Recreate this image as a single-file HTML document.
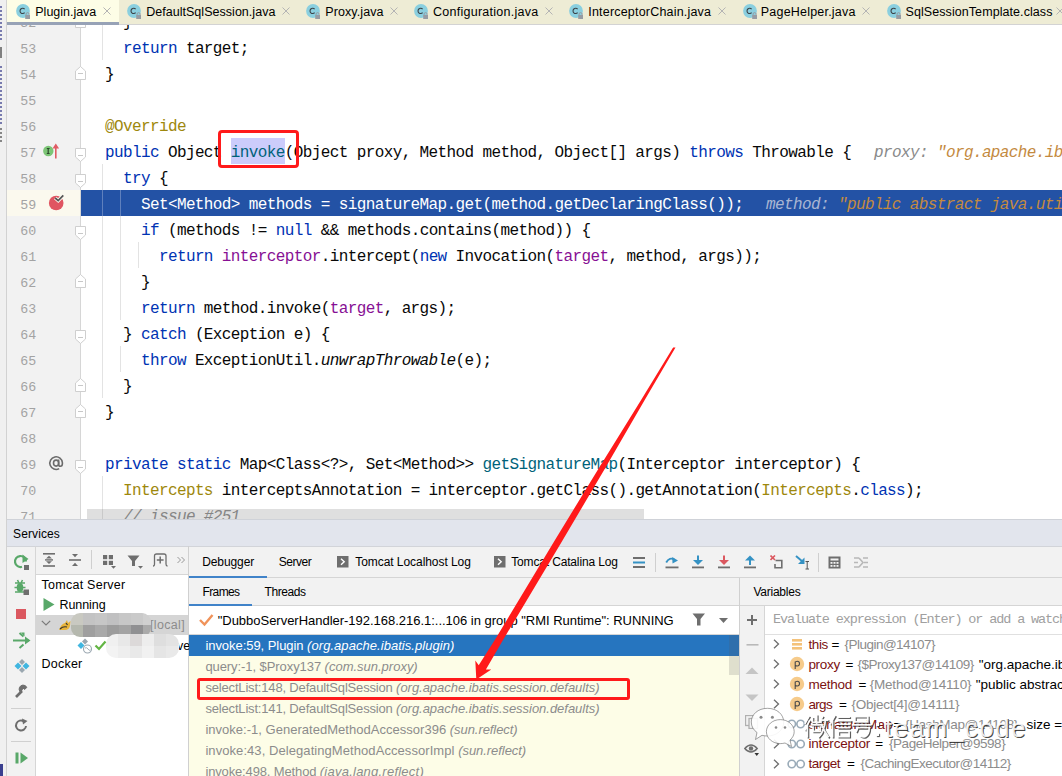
<!DOCTYPE html>
<html><head><meta charset="utf-8"><style>
html,body{margin:0;padding:0;}
body{width:1062px;height:776px;overflow:hidden;position:relative;background:#fff;}
div{box-sizing:border-box;}
</style></head><body>
<div style="position:absolute;left:7px;top:25px;width:73px;height:494px;background:#f2f2f2;"></div>
<div style="position:absolute;left:7px;top:190px;width:73px;height:26px;background:#fbf9ee;"></div>
<div style="position:absolute;left:81px;top:190px;width:981px;height:26px;background:#2352a5;"></div>
<div style="position:absolute;left:80px;top:25px;width:1px;height:494px;background:#d6d6d6;"></div>
<div style="position:absolute;left:102px;top:25px;width:1px;height:35px;background:#e3e3e3;"></div>
<div style="position:absolute;left:102px;top:164px;width:1px;height:26px;background:#e3e3e3;"></div>
<div style="position:absolute;left:102px;top:216px;width:1px;height:182px;background:#e3e3e3;"></div>
<div style="position:absolute;left:102px;top:476px;width:1px;height:43px;background:#e3e3e3;"></div>
<div style="position:absolute;left:120px;top:216px;width:1px;height:104px;background:#e3e3e3;"></div>
<div style="position:absolute;left:120px;top:346px;width:1px;height:26px;background:#e3e3e3;"></div>
<div style="position:absolute;left:138px;top:242px;width:1px;height:26px;background:#e3e3e3;"></div>
<div style="position:absolute;left:102px;top:190px;width:1px;height:26px;background:#5f80bd;"></div>
<div style="position:absolute;left:120px;top:190px;width:1px;height:26px;background:#5f80bd;"></div>
<div style="position:absolute;left:231px;top:138px;width:54px;height:26px;background:#ccccfb;"></div>
<div style="position:absolute;left:20.20px;top:16px;font-family:'Liberation Mono', monospace;font-size:13.3px;line-height:15.066px;color:#a3a3a3;white-space:pre;letter-spacing:0.021px;">52</div>
<div style="position:absolute;left:20.20px;top:42px;font-family:'Liberation Mono', monospace;font-size:13.3px;line-height:15.066px;color:#a3a3a3;white-space:pre;letter-spacing:0.021px;">53</div>
<div style="position:absolute;left:20.20px;top:68px;font-family:'Liberation Mono', monospace;font-size:13.3px;line-height:15.066px;color:#a3a3a3;white-space:pre;letter-spacing:0.021px;">54</div>
<div style="position:absolute;left:20.20px;top:94px;font-family:'Liberation Mono', monospace;font-size:13.3px;line-height:15.066px;color:#a3a3a3;white-space:pre;letter-spacing:0.021px;">55</div>
<div style="position:absolute;left:20.20px;top:120px;font-family:'Liberation Mono', monospace;font-size:13.3px;line-height:15.066px;color:#a3a3a3;white-space:pre;letter-spacing:0.021px;">56</div>
<div style="position:absolute;left:20.20px;top:146px;font-family:'Liberation Mono', monospace;font-size:13.3px;line-height:15.066px;color:#a3a3a3;white-space:pre;letter-spacing:0.021px;">57</div>
<div style="position:absolute;left:20.20px;top:172px;font-family:'Liberation Mono', monospace;font-size:13.3px;line-height:15.066px;color:#a3a3a3;white-space:pre;letter-spacing:0.021px;">58</div>
<div style="position:absolute;left:20.20px;top:198px;font-family:'Liberation Mono', monospace;font-size:13.3px;line-height:15.066px;color:#a3a3a3;white-space:pre;letter-spacing:0.021px;">59</div>
<div style="position:absolute;left:20.20px;top:224px;font-family:'Liberation Mono', monospace;font-size:13.3px;line-height:15.066px;color:#a3a3a3;white-space:pre;letter-spacing:0.021px;">60</div>
<div style="position:absolute;left:20.20px;top:250px;font-family:'Liberation Mono', monospace;font-size:13.3px;line-height:15.066px;color:#a3a3a3;white-space:pre;letter-spacing:0.021px;">61</div>
<div style="position:absolute;left:20.20px;top:276px;font-family:'Liberation Mono', monospace;font-size:13.3px;line-height:15.066px;color:#a3a3a3;white-space:pre;letter-spacing:0.021px;">62</div>
<div style="position:absolute;left:20.20px;top:302px;font-family:'Liberation Mono', monospace;font-size:13.3px;line-height:15.066px;color:#a3a3a3;white-space:pre;letter-spacing:0.021px;">63</div>
<div style="position:absolute;left:20.20px;top:328px;font-family:'Liberation Mono', monospace;font-size:13.3px;line-height:15.066px;color:#a3a3a3;white-space:pre;letter-spacing:0.021px;">64</div>
<div style="position:absolute;left:20.20px;top:354px;font-family:'Liberation Mono', monospace;font-size:13.3px;line-height:15.066px;color:#a3a3a3;white-space:pre;letter-spacing:0.021px;">65</div>
<div style="position:absolute;left:20.20px;top:380px;font-family:'Liberation Mono', monospace;font-size:13.3px;line-height:15.066px;color:#a3a3a3;white-space:pre;letter-spacing:0.021px;">66</div>
<div style="position:absolute;left:20.20px;top:406px;font-family:'Liberation Mono', monospace;font-size:13.3px;line-height:15.066px;color:#a3a3a3;white-space:pre;letter-spacing:0.021px;">67</div>
<div style="position:absolute;left:20.20px;top:432px;font-family:'Liberation Mono', monospace;font-size:13.3px;line-height:15.066px;color:#a3a3a3;white-space:pre;letter-spacing:0.021px;">68</div>
<div style="position:absolute;left:20.20px;top:458px;font-family:'Liberation Mono', monospace;font-size:13.3px;line-height:15.066px;color:#a3a3a3;white-space:pre;letter-spacing:0.021px;">69</div>
<div style="position:absolute;left:20.20px;top:484px;font-family:'Liberation Mono', monospace;font-size:13.3px;line-height:15.066px;color:#a3a3a3;white-space:pre;letter-spacing:0.021px;">70</div>
<div style="position:absolute;left:20.20px;top:510px;font-family:'Liberation Mono', monospace;font-size:13.3px;line-height:15.066px;color:#a3a3a3;white-space:pre;letter-spacing:0.021px;">71</div>
<div style="position:absolute;left:87.0px;top:14.28px;font-family:'Liberation Mono', monospace;font-size:16px;line-height:18.125px;letter-spacing:-0.612px;white-space:pre;"><span style="color:#080808;">    }</span></div>
<div style="position:absolute;left:87.0px;top:40.28px;font-family:'Liberation Mono', monospace;font-size:16px;line-height:18.125px;letter-spacing:-0.612px;white-space:pre;"><span style="color:#080808;">    </span><span style="color:#0033b3;">return</span><span style="color:#080808;"> target;</span></div>
<div style="position:absolute;left:87.0px;top:66.28px;font-family:'Liberation Mono', monospace;font-size:16px;line-height:18.125px;letter-spacing:-0.612px;white-space:pre;"><span style="color:#080808;">  }</span></div>
<div style="position:absolute;left:87.0px;top:118.28px;font-family:'Liberation Mono', monospace;font-size:16px;line-height:18.125px;letter-spacing:-0.612px;white-space:pre;"><span style="color:#9e880d;">  @Override</span></div>
<div style="position:absolute;left:87.0px;top:144.28px;font-family:'Liberation Mono', monospace;font-size:16px;line-height:18.125px;letter-spacing:-0.612px;white-space:pre;"><span style="color:#080808;">  </span><span style="color:#0033b3;">public</span><span style="color:#080808;"> Object </span><span style="color:#00627a;">invoke</span><span style="color:#080808;">(Object proxy, Method method, Object[] args) </span><span style="color:#0033b3;">throws</span><span style="color:#080808;"> Throwable {</span></div>
<div style="position:absolute;left:87.0px;top:170.28px;font-family:'Liberation Mono', monospace;font-size:16px;line-height:18.125px;letter-spacing:-0.612px;white-space:pre;"><span style="color:#080808;">    </span><span style="color:#0033b3;">try</span><span style="color:#080808;"> {</span></div>
<div style="position:absolute;left:87.0px;top:196.28px;font-family:'Liberation Mono', monospace;font-size:16px;line-height:18.125px;letter-spacing:-0.612px;white-space:pre;"><span style="color:#ffffff;">      Set&lt;Method&gt; methods = signatureMap.get(method.getDeclaringClass());</span></div>
<div style="position:absolute;left:87.0px;top:222.28px;font-family:'Liberation Mono', monospace;font-size:16px;line-height:18.125px;letter-spacing:-0.612px;white-space:pre;"><span style="color:#080808;">      </span><span style="color:#0033b3;">if</span><span style="color:#080808;"> (methods != </span><span style="color:#0033b3;">null</span><span style="color:#080808;"> &amp;&amp; methods.contains(method)) {</span></div>
<div style="position:absolute;left:87.0px;top:248.28px;font-family:'Liberation Mono', monospace;font-size:16px;line-height:18.125px;letter-spacing:-0.612px;white-space:pre;"><span style="color:#080808;">        </span><span style="color:#0033b3;">return</span><span style="color:#080808;"> </span><span style="color:#871094;">interceptor</span><span style="color:#080808;">.intercept(</span><span style="color:#0033b3;">new</span><span style="color:#080808;"> Invocation(</span><span style="color:#871094;">target</span><span style="color:#080808;">, method, args));</span></div>
<div style="position:absolute;left:87.0px;top:274.28px;font-family:'Liberation Mono', monospace;font-size:16px;line-height:18.125px;letter-spacing:-0.612px;white-space:pre;"><span style="color:#080808;">      }</span></div>
<div style="position:absolute;left:87.0px;top:300.28px;font-family:'Liberation Mono', monospace;font-size:16px;line-height:18.125px;letter-spacing:-0.612px;white-space:pre;"><span style="color:#080808;">      </span><span style="color:#0033b3;">return</span><span style="color:#080808;"> method.invoke(</span><span style="color:#871094;">target</span><span style="color:#080808;">, args);</span></div>
<div style="position:absolute;left:87.0px;top:326.28px;font-family:'Liberation Mono', monospace;font-size:16px;line-height:18.125px;letter-spacing:-0.612px;white-space:pre;"><span style="color:#080808;">    } </span><span style="color:#0033b3;">catch</span><span style="color:#080808;"> (Exception e) {</span></div>
<div style="position:absolute;left:87.0px;top:352.28px;font-family:'Liberation Mono', monospace;font-size:16px;line-height:18.125px;letter-spacing:-0.612px;white-space:pre;"><span style="color:#080808;">      </span><span style="color:#0033b3;">throw</span><span style="color:#080808;"> ExceptionUtil.</span><span style="color:#080808;font-style:italic;">unwrapThrowable</span><span style="color:#080808;">(e);</span></div>
<div style="position:absolute;left:87.0px;top:378.28px;font-family:'Liberation Mono', monospace;font-size:16px;line-height:18.125px;letter-spacing:-0.612px;white-space:pre;"><span style="color:#080808;">    }</span></div>
<div style="position:absolute;left:87.0px;top:404.28px;font-family:'Liberation Mono', monospace;font-size:16px;line-height:18.125px;letter-spacing:-0.612px;white-space:pre;"><span style="color:#080808;">  }</span></div>
<div style="position:absolute;left:87.0px;top:456.28px;font-family:'Liberation Mono', monospace;font-size:16px;line-height:18.125px;letter-spacing:-0.612px;white-space:pre;"><span style="color:#080808;">  </span><span style="color:#0033b3;">private static</span><span style="color:#080808;"> Map&lt;Class&lt;?&gt;, Set&lt;Method&gt;&gt; </span><span style="color:#00627a;">getSignatureMap</span><span style="color:#080808;">(Interceptor interceptor) {</span></div>
<div style="position:absolute;left:87.0px;top:482.28px;font-family:'Liberation Mono', monospace;font-size:16px;line-height:18.125px;letter-spacing:-0.612px;white-space:pre;"><span style="color:#080808;">    </span><span style="color:#9e880d;">Intercepts</span><span style="color:#080808;"> interceptsAnnotation = interceptor.getClass().getAnnotation(</span><span style="color:#9e880d;">Intercepts</span><span style="color:#080808;">.</span><span style="color:#0033b3;">class</span><span style="color:#080808;">);</span></div>
<div style="position:absolute;left:87.0px;top:508.28px;font-family:'Liberation Mono', monospace;font-size:16px;line-height:18.125px;letter-spacing:-0.612px;white-space:pre;"><span style="color:#080808;">    </span><span style="color:#8c8c8c;font-style:italic;">// issue #251</span></div>
<div style="position:absolute;left:874px;top:144.28px;font-family:'Liberation Mono', monospace;font-size:16px;line-height:18.125px;letter-spacing:-0.612px;white-space:pre;font-style:italic;"><span style="color:#8a8a8a">proxy: </span><span style="color:#c48a3f">&quot;org.apache.ibatis.plugin.Plugin@</span></div>
<div style="position:absolute;left:766px;top:196.28px;font-family:'Liberation Mono', monospace;font-size:16px;line-height:18.125px;letter-spacing:-0.612px;white-space:pre;font-style:italic;"><span style="color:#a9b6d3">method: </span><span style="color:#c48a3f">&quot;public abstract java.util.List</span></div>
<div style="position:absolute;left:87px;top:509px;width:557px;height:10px;background:rgba(110,110,110,0.22);"></div>
<svg style="position:absolute;left:75px;top:14.3px" width="12" height="15"><polygon points="5.5,0.5 10.5,5 10.5,13.5 0.5,13.5 0.5,5" fill="#ffffff" stroke="#cfcfcf" stroke-width="1"/><line x1="3" y1="7.5" x2="8" y2="7.5" stroke="#c8c8c8" stroke-width="1"/></svg>
<svg style="position:absolute;left:75px;top:66.3px" width="12" height="15"><polygon points="5.5,0.5 10.5,5 10.5,13.5 0.5,13.5 0.5,5" fill="#ffffff" stroke="#cfcfcf" stroke-width="1"/><line x1="3" y1="7.5" x2="8" y2="7.5" stroke="#c8c8c8" stroke-width="1"/></svg>
<svg style="position:absolute;left:75px;top:147.5px" width="12" height="15"><polygon points="0.5,0.5 10.5,0.5 10.5,9 5.5,13.5 0.5,9" fill="#ffffff" stroke="#cfcfcf" stroke-width="1"/><line x1="3" y1="7.5" x2="8" y2="7.5" stroke="#c8c8c8" stroke-width="1"/></svg>
<svg style="position:absolute;left:75px;top:173.5px" width="12" height="15"><polygon points="0.5,0.5 10.5,0.5 10.5,9 5.5,13.5 0.5,9" fill="#ffffff" stroke="#cfcfcf" stroke-width="1"/><line x1="3" y1="7.5" x2="8" y2="7.5" stroke="#c8c8c8" stroke-width="1"/></svg>
<svg style="position:absolute;left:75px;top:225.5px" width="12" height="15"><polygon points="0.5,0.5 10.5,0.5 10.5,9 5.5,13.5 0.5,9" fill="#ffffff" stroke="#cfcfcf" stroke-width="1"/><line x1="3" y1="7.5" x2="8" y2="7.5" stroke="#c8c8c8" stroke-width="1"/></svg>
<svg style="position:absolute;left:75px;top:274.3px" width="12" height="15"><polygon points="5.5,0.5 10.5,5 10.5,13.5 0.5,13.5 0.5,5" fill="#ffffff" stroke="#cfcfcf" stroke-width="1"/><line x1="3" y1="7.5" x2="8" y2="7.5" stroke="#c8c8c8" stroke-width="1"/></svg>
<svg style="position:absolute;left:75px;top:329.5px" width="12" height="15"><polygon points="0.5,0.5 10.5,0.5 10.5,9 5.5,13.5 0.5,9" fill="#ffffff" stroke="#cfcfcf" stroke-width="1"/><line x1="3" y1="7.5" x2="8" y2="7.5" stroke="#c8c8c8" stroke-width="1"/></svg>
<svg style="position:absolute;left:75px;top:378.3px" width="12" height="15"><polygon points="5.5,0.5 10.5,5 10.5,13.5 0.5,13.5 0.5,5" fill="#ffffff" stroke="#cfcfcf" stroke-width="1"/><line x1="3" y1="7.5" x2="8" y2="7.5" stroke="#c8c8c8" stroke-width="1"/></svg>
<svg style="position:absolute;left:75px;top:404.3px" width="12" height="15"><polygon points="5.5,0.5 10.5,5 10.5,13.5 0.5,13.5 0.5,5" fill="#ffffff" stroke="#cfcfcf" stroke-width="1"/><line x1="3" y1="7.5" x2="8" y2="7.5" stroke="#c8c8c8" stroke-width="1"/></svg>
<svg style="position:absolute;left:75px;top:459.5px" width="12" height="15"><polygon points="0.5,0.5 10.5,0.5 10.5,9 5.5,13.5 0.5,9" fill="#ffffff" stroke="#cfcfcf" stroke-width="1"/><line x1="3" y1="7.5" x2="8" y2="7.5" stroke="#c8c8c8" stroke-width="1"/></svg>
<svg style="position:absolute;left:40px;top:142px" width="24" height="18"><circle cx="8.3" cy="9" r="5.2" fill="#7cc576"/><line x1="8.2" y1="6.5" x2="8.2" y2="11.5" stroke="#2d4a2d" stroke-width="1.2"/><line x1="6.8" y1="6.5" x2="9.6" y2="6.5" stroke="#2d4a2d" stroke-width="1"/><line x1="6.8" y1="11.5" x2="9.6" y2="11.5" stroke="#2d4a2d" stroke-width="1"/><line x1="15.8" y1="4" x2="15.8" y2="16.5" stroke="#e05c65" stroke-width="1.6"/><polygon points="12.5,6.5 15.8,1.5 19.1,6.5" fill="#e05c65"/></svg>
<svg style="position:absolute;left:46px;top:193px" width="22" height="20"><circle cx="10.2" cy="10" r="7.3" fill="#e05561"/><polyline points="9.2,5 12.2,7.6 17.3,2.4" fill="none" stroke="#fbf9ee" stroke-width="3.6"/><polyline points="9.2,5 12.2,7.6 17.3,2.4" fill="none" stroke="#555555" stroke-width="1.7"/></svg>
<svg style="position:absolute;left:48px;top:455px" width="16" height="16" viewBox="0 0 16 16"><path d="M11.2 13.6 A6.3 6.3 0 1 1 14.4 7.8 V8.6 Q14.4 11.3 12.4 11.3 Q10.6 11.3 10.6 9.2 V4.6" fill="none" stroke="#6b6b6b" stroke-width="1.6"/><ellipse cx="8.1" cy="8.1" rx="2.6" ry="3" fill="none" stroke="#6b6b6b" stroke-width="1.6"/></svg>
<div style="position:absolute;left:0px;top:0px;width:7px;height:776px;background:#f0f0f0;"></div>
<div style="position:absolute;left:6px;top:0px;width:1px;height:776px;background:#d2d2d2;"></div>
<div style="position:absolute;left:0px;top:6px;width:2px;height:34px;background:repeating-linear-gradient(180deg,rgba(40,45,130,0.6) 0 2px,rgba(240,240,240,0) 2px 4px);"></div>
<div style="position:absolute;left:0px;top:47px;width:2px;height:11px;background:rgba(100,100,100,0.8);"></div>
<div style="position:absolute;left:0px;top:66px;width:2px;height:60px;background:repeating-linear-gradient(180deg,rgba(40,45,130,0.6) 0 2.5px,rgba(240,240,240,0) 2.5px 4px);"></div>
<div style="position:absolute;left:0px;top:128px;width:2px;height:15px;background:repeating-linear-gradient(180deg,rgba(90,90,90,0.7) 0 2px,rgba(240,240,240,0) 2px 4px);"></div>
<div style="position:absolute;left:0px;top:764px;width:3px;height:12px;background:#3a3f8f;"></div>
<div style="position:absolute;left:7px;top:0px;width:1055px;height:24px;background:#eeecd5;"></div>
<div style="position:absolute;left:7px;top:24px;width:1055px;height:1px;background:#d3d3d3;"></div>
<div style="position:absolute;left:7px;top:0px;width:112px;height:22px;background:#fdfde6;"></div>
<div style="position:absolute;left:7px;top:22px;width:112px;height:3px;background:#97a2b6;"></div>
<svg style="position:absolute;left:14.6px;top:2px" width="18" height="19"><circle cx="8" cy="9" r="6.9" fill="#8acfdf"/><path d="M9.6 7.2 A2.6 2.6 0 1 0 9.6 10.6" fill="none" stroke="#3c4348" stroke-width="1.1"/><rect x="10.2" y="13" width="4.8" height="4" fill="#969ca4"/><path d="M11.1 13 v-0.9 a1.5 1.5 0 0 1 3 0 v0.9" fill="none" stroke="#969ca4" stroke-width="1"/></svg>
<div style="position:absolute;left:35.30px;top:6px;font-family:'Liberation Sans', sans-serif;font-size:12.5px;line-height:13.965px;color:#000000;white-space:pre;letter-spacing:-0.014px;">Plugin.java</div>
<svg style="position:absolute;left:102.0px;top:6px" width="10" height="10"><path d="M1.5 1.5 L8.5 8.5 M8.5 1.5 L1.5 8.5" stroke="#b4b4b4" stroke-width="1"/></svg>
<svg style="position:absolute;left:126.0px;top:2px" width="18" height="19"><circle cx="8" cy="9" r="6.9" fill="#8acfdf"/><path d="M9.6 7.2 A2.6 2.6 0 1 0 9.6 10.6" fill="none" stroke="#3c4348" stroke-width="1.1"/><rect x="10.2" y="13" width="4.8" height="4" fill="#969ca4"/><path d="M11.1 13 v-0.9 a1.5 1.5 0 0 1 3 0 v0.9" fill="none" stroke="#969ca4" stroke-width="1"/></svg>
<div style="position:absolute;left:146.20px;top:6px;font-family:'Liberation Sans', sans-serif;font-size:12.5px;line-height:13.965px;color:#000000;white-space:pre;letter-spacing:0.030px;">DefaultSqlSession.java</div>
<svg style="position:absolute;left:280.7px;top:6px" width="10" height="10"><path d="M1.5 1.5 L8.5 8.5 M8.5 1.5 L1.5 8.5" stroke="#b4b4b4" stroke-width="1"/></svg>
<svg style="position:absolute;left:304.8px;top:2px" width="18" height="19"><circle cx="8" cy="9" r="6.9" fill="#8acfdf"/><path d="M9.6 7.2 A2.6 2.6 0 1 0 9.6 10.6" fill="none" stroke="#3c4348" stroke-width="1.1"/><rect x="10.2" y="13" width="4.8" height="4" fill="#969ca4"/><path d="M11.1 13 v-0.9 a1.5 1.5 0 0 1 3 0 v0.9" fill="none" stroke="#969ca4" stroke-width="1"/></svg>
<div style="position:absolute;left:325.30px;top:6px;font-family:'Liberation Sans', sans-serif;font-size:12.5px;line-height:13.965px;color:#000000;white-space:pre;letter-spacing:0.087px;">Proxy.java</div>
<svg style="position:absolute;left:388.9px;top:6px" width="10" height="10"><path d="M1.5 1.5 L8.5 8.5 M8.5 1.5 L1.5 8.5" stroke="#b4b4b4" stroke-width="1"/></svg>
<svg style="position:absolute;left:413.2px;top:2px" width="18" height="19"><circle cx="8" cy="9" r="6.9" fill="#8acfdf"/><path d="M9.6 7.2 A2.6 2.6 0 1 0 9.6 10.6" fill="none" stroke="#3c4348" stroke-width="1.1"/><rect x="10.2" y="13" width="4.8" height="4" fill="#969ca4"/><path d="M11.1 13 v-0.9 a1.5 1.5 0 0 1 3 0 v0.9" fill="none" stroke="#969ca4" stroke-width="1"/></svg>
<div style="position:absolute;left:433.00px;top:6px;font-family:'Liberation Sans', sans-serif;font-size:12.5px;line-height:13.965px;color:#000000;white-space:pre;letter-spacing:0.264px;">Configuration.java</div>
<svg style="position:absolute;left:544.0px;top:6px" width="10" height="10"><path d="M1.5 1.5 L8.5 8.5 M8.5 1.5 L1.5 8.5" stroke="#b4b4b4" stroke-width="1"/></svg>
<svg style="position:absolute;left:568.1px;top:2px" width="18" height="19"><circle cx="8" cy="9" r="6.9" fill="#8acfdf"/><path d="M9.6 7.2 A2.6 2.6 0 1 0 9.6 10.6" fill="none" stroke="#3c4348" stroke-width="1.1"/><rect x="10.2" y="13" width="4.8" height="4" fill="#969ca4"/><path d="M11.1 13 v-0.9 a1.5 1.5 0 0 1 3 0 v0.9" fill="none" stroke="#969ca4" stroke-width="1"/></svg>
<div style="position:absolute;left:588.30px;top:6px;font-family:'Liberation Sans', sans-serif;font-size:12.5px;line-height:13.965px;color:#000000;white-space:pre;letter-spacing:0.194px;">InterceptorChain.java</div>
<svg style="position:absolute;left:717.2px;top:6px" width="10" height="10"><path d="M1.5 1.5 L8.5 8.5 M8.5 1.5 L1.5 8.5" stroke="#b4b4b4" stroke-width="1"/></svg>
<svg style="position:absolute;left:741.5px;top:2px" width="18" height="19"><circle cx="8" cy="9" r="6.9" fill="#8acfdf"/><path d="M9.6 7.2 A2.6 2.6 0 1 0 9.6 10.6" fill="none" stroke="#3c4348" stroke-width="1.1"/><rect x="10.2" y="13" width="4.8" height="4" fill="#969ca4"/><path d="M11.1 13 v-0.9 a1.5 1.5 0 0 1 3 0 v0.9" fill="none" stroke="#969ca4" stroke-width="1"/></svg>
<div style="position:absolute;left:760.80px;top:6px;font-family:'Liberation Sans', sans-serif;font-size:12.5px;line-height:13.965px;color:#000000;white-space:pre;letter-spacing:0.205px;">PageHelper.java</div>
<svg style="position:absolute;left:861.2px;top:6px" width="10" height="10"><path d="M1.5 1.5 L8.5 8.5 M8.5 1.5 L1.5 8.5" stroke="#b4b4b4" stroke-width="1"/></svg>
<svg style="position:absolute;left:885.5px;top:2px" width="18" height="19"><circle cx="8" cy="9" r="6.9" fill="#8acfdf"/><path d="M9.6 7.2 A2.6 2.6 0 1 0 9.6 10.6" fill="none" stroke="#3c4348" stroke-width="1.1"/><rect x="10.2" y="13" width="4.8" height="4" fill="#969ca4"/><path d="M11.1 13 v-0.9 a1.5 1.5 0 0 1 3 0 v0.9" fill="none" stroke="#969ca4" stroke-width="1"/></svg>
<div style="position:absolute;left:905.50px;top:6px;font-family:'Liberation Sans', sans-serif;font-size:12.5px;line-height:13.965px;color:#000000;white-space:pre;letter-spacing:0.075px;">SqlSessionTemplate.class</div>
<svg style="position:absolute;left:1055.0px;top:6px" width="10" height="10"><path d="M1.5 1.5 L8.5 8.5 M8.5 1.5 L1.5 8.5" stroke="#b4b4b4" stroke-width="1"/></svg>
<div style="position:absolute;left:7px;top:519px;width:1055px;height:257px;background:#f2f2f2;"></div>
<div style="position:absolute;left:7px;top:519px;width:1055px;height:27px;background:#e2e5ed;"></div>
<div style="position:absolute;left:7px;top:519px;width:1055px;height:1px;background:#cfd2d8;"></div>
<div style="position:absolute;left:7px;top:546px;width:1055px;height:1px;background:#d2d4d9;"></div>
<div style="position:absolute;left:13.00px;top:528px;font-family:'Liberation Sans', sans-serif;font-size:12px;line-height:13.406px;color:#000;white-space:pre;letter-spacing:0.123px;">Services</div>
<div style="position:absolute;left:35px;top:546px;width:1px;height:230px;background:#d6d6d6;"></div>
<div style="position:absolute;left:36px;top:574px;width:152px;height:1px;background:#d6d6d6;"></div>
<div style="position:absolute;left:36px;top:575px;width:152px;height:201px;background:#ffffff;"></div>
<div style="position:absolute;left:188px;top:546px;width:1px;height:230px;background:#d0d0d0;"></div>
<div style="position:absolute;left:41.50px;top:579px;font-family:'Liberation Sans', sans-serif;font-size:12.5px;line-height:13.965px;color:#000;white-space:pre;letter-spacing:0.263px;">Tomcat Server</div>
<svg style="position:absolute;left:42px;top:597px" width="14" height="15"><polygon points="1.5,1 12.5,7.5 1.5,14" fill="#59a869"/></svg>
<div style="position:absolute;left:59.50px;top:599px;font-family:'Liberation Sans', sans-serif;font-size:12.5px;line-height:13.965px;color:#000;white-space:pre;letter-spacing:-0.081px;">Running</div>
<div style="position:absolute;left:36px;top:615px;width:152px;height:20px;background:#d5d5d5;"></div>
<div style="position:absolute;left:150.00px;top:619px;font-family:'Liberation Sans', sans-serif;font-size:12.5px;line-height:13.965px;color:#8c8c8c;white-space:pre;letter-spacing:0.335px;">[local]</div>
<div style="position:absolute;left:177.00px;top:640px;font-family:'Liberation Sans', sans-serif;font-size:12.5px;line-height:13.965px;color:#000;white-space:pre;">ve</div>
<div style="position:absolute;left:41.50px;top:658px;font-family:'Liberation Sans', sans-serif;font-size:12.5px;line-height:13.965px;color:#000;white-space:pre;letter-spacing:0.234px;">Docker</div>
<div style="position:absolute;left:189px;top:577px;width:873px;height:1px;background:#d5d5d5;"></div>
<div style="position:absolute;left:189px;top:576px;width:78px;height:2px;background:#4083c9;"></div>
<div style="position:absolute;left:202.20px;top:556px;font-family:'Liberation Sans', sans-serif;font-size:12px;line-height:13.406px;color:#000;white-space:pre;letter-spacing:-0.088px;">Debugger</div>
<div style="position:absolute;left:278.80px;top:556px;font-family:'Liberation Sans', sans-serif;font-size:12px;line-height:13.406px;color:#000;white-space:pre;letter-spacing:-0.474px;">Server</div>
<div style="position:absolute;left:355.30px;top:556px;font-family:'Liberation Sans', sans-serif;font-size:12px;line-height:13.406px;color:#000;white-space:pre;letter-spacing:-0.062px;">Tomcat Localhost Log</div>
<div style="position:absolute;left:511.20px;top:556px;font-family:'Liberation Sans', sans-serif;font-size:12px;line-height:13.406px;color:#000;white-space:pre;letter-spacing:-0.152px;">Tomcat Catalina Log</div>
<svg style="position:absolute;left:337.2px;top:556px" width="12" height="12"><rect x="0" y="0" width="11.5" height="11.5" fill="#6e6e6e"/><path d="M4 2.8 L7.2 5.8 L4 8.8" fill="none" stroke="#fff" stroke-width="1.4"/></svg>
<svg style="position:absolute;left:493.5px;top:556px" width="12" height="12"><rect x="0" y="0" width="11.5" height="11.5" fill="#6e6e6e"/><path d="M4 2.8 L7.2 5.8 L4 8.8" fill="none" stroke="#fff" stroke-width="1.4"/></svg>
<div style="position:absolute;left:189px;top:605px;width:873px;height:1px;background:#d5d5d5;"></div>
<div style="position:absolute;left:189px;top:604px;width:63px;height:2px;background:#4083c9;"></div>
<div style="position:absolute;left:202.50px;top:586px;font-family:'Liberation Sans', sans-serif;font-size:12px;line-height:13.406px;color:#000;white-space:pre;letter-spacing:-0.612px;">Frames</div>
<div style="position:absolute;left:264.50px;top:586px;font-family:'Liberation Sans', sans-serif;font-size:12px;line-height:13.406px;color:#000;white-space:pre;letter-spacing:-0.432px;">Threads</div>
<div style="position:absolute;left:753.40px;top:586px;font-family:'Liberation Sans', sans-serif;font-size:12px;line-height:13.406px;color:#000;white-space:pre;letter-spacing:-0.237px;">Variables</div>
<div style="position:absolute;left:739px;top:578px;width:1px;height:198px;background:#d0d0d0;"></div>
<div style="position:absolute;left:189px;top:606px;width:550px;height:28px;background:#ffffff;"></div>
<div style="position:absolute;left:189px;top:634px;width:550px;height:1px;background:#d5d5d5;"></div>
<svg style="position:absolute;left:198px;top:612px" width="18" height="16"><polyline points="2,8 6.5,12.5 14.5,3" fill="none" stroke="#f0935a" stroke-width="2.4"/></svg>
<div style="position:absolute;left:217.70px;top:614px;font-family:'Liberation Sans', sans-serif;font-size:13px;line-height:14.523px;color:#000;white-space:pre;letter-spacing:-0.021px;">&quot;DubboServerHandler-192.168.216.1:...106 in group &quot;RMI Runtime&quot;: RUNNING</div>
<div style="position:absolute;left:189px;top:635px;width:550px;height:141px;background:#fdfde7;"></div>
<div style="position:absolute;left:189px;top:635px;width:550px;height:21px;background:#2675bf;"></div>
<div style="position:absolute;left:205.40px;top:639px;font-family:'Liberation Sans', sans-serif;font-size:13px;line-height:14.523px;color:#ffffff;white-space:pre;letter-spacing:-0.051px;">invoke:59, Plugin </div>
<div style="position:absolute;left:307.10px;top:639px;font-family:'Liberation Sans', sans-serif;font-size:13px;line-height:14.523px;color:#ffffff;white-space:pre;font-style:italic;letter-spacing:0.051px;">(org.apache.ibatis.plugin)</div>
<div style="position:absolute;left:205.40px;top:660px;font-family:'Liberation Sans', sans-serif;font-size:13px;line-height:14.523px;color:#8c8c8c;white-space:pre;letter-spacing:-0.074px;">query:-1, $Proxy137 </div>
<div style="position:absolute;left:324.60px;top:660px;font-family:'Liberation Sans', sans-serif;font-size:13px;line-height:14.523px;color:#8c8c8c;white-space:pre;font-style:italic;letter-spacing:-0.006px;">(com.sun.proxy)</div>
<div style="position:absolute;left:205.40px;top:681px;font-family:'Liberation Sans', sans-serif;font-size:13px;line-height:14.523px;color:#8c8c8c;white-space:pre;letter-spacing:-0.172px;">selectList:148, DefaultSqlSession </div>
<div style="position:absolute;left:396.10px;top:681px;font-family:'Liberation Sans', sans-serif;font-size:13px;line-height:14.523px;color:#8c8c8c;white-space:pre;font-style:italic;letter-spacing:-0.031px;">(org.apache.ibatis.session.defaults)</div>
<div style="position:absolute;left:205.40px;top:702px;font-family:'Liberation Sans', sans-serif;font-size:13px;line-height:14.523px;color:#8c8c8c;white-space:pre;letter-spacing:-0.172px;">selectList:141, DefaultSqlSession </div>
<div style="position:absolute;left:396.10px;top:702px;font-family:'Liberation Sans', sans-serif;font-size:13px;line-height:14.523px;color:#8c8c8c;white-space:pre;font-style:italic;letter-spacing:-0.031px;">(org.apache.ibatis.session.defaults)</div>
<div style="position:absolute;left:205.40px;top:723px;font-family:'Liberation Sans', sans-serif;font-size:13px;line-height:14.523px;color:#8c8c8c;white-space:pre;letter-spacing:0.023px;">invoke:-1, GeneratedMethodAccessor396 </div>
<div style="position:absolute;left:449.80px;top:723px;font-family:'Liberation Sans', sans-serif;font-size:13px;line-height:14.523px;color:#8c8c8c;white-space:pre;font-style:italic;letter-spacing:-0.064px;">(sun.reflect)</div>
<div style="position:absolute;left:205.40px;top:744px;font-family:'Liberation Sans', sans-serif;font-size:13px;line-height:14.523px;color:#8c8c8c;white-space:pre;letter-spacing:0.069px;">invoke:43, DelegatingMethodAccessorImpl </div>
<div style="position:absolute;left:458.20px;top:744px;font-family:'Liberation Sans', sans-serif;font-size:13px;line-height:14.523px;color:#8c8c8c;white-space:pre;font-style:italic;letter-spacing:-0.056px;">(sun.reflect)</div>
<div style="position:absolute;left:205.40px;top:765px;font-family:'Liberation Sans', sans-serif;font-size:13px;line-height:14.523px;color:#8c8c8c;white-space:pre;letter-spacing:-0.141px;">invoke:498, Method </div>
<div style="position:absolute;left:319.80px;top:765px;font-family:'Liberation Sans', sans-serif;font-size:13px;line-height:14.523px;color:#8c8c8c;white-space:pre;font-style:italic;letter-spacing:0.236px;">(java.lang.reflect)</div>
<div style="position:absolute;left:729px;top:635px;width:10px;height:40px;background:rgba(90,90,90,0.18);"></div>
<div style="position:absolute;left:764px;top:606px;width:1px;height:170px;background:#d6d6d6;"></div>
<div style="position:absolute;left:765px;top:606px;width:297px;height:28px;background:#ffffff;"></div>
<div style="position:absolute;left:765px;top:634px;width:297px;height:1px;background:#e0e0e0;"></div>
<div style="position:absolute;left:773.00px;top:612px;font-family:'Liberation Mono', monospace;font-size:13.5px;line-height:15.293px;color:#a0a0a0;white-space:pre;letter-spacing:-1.125px;">Evaluate expression (Enter) or add a watch</div>
<div style="position:absolute;left:765px;top:635px;width:297px;height:141px;background:#ffffff;"></div>
<svg style="position:absolute;left:771px;top:638.3px" width="10" height="12"><path d="M3 1.8 L7.5 6 L3 10.2" fill="none" stroke="#6e6e6e" stroke-width="1.3"/></svg>
<svg style="position:absolute;left:792px;top:638.8px" width="11" height="12"><rect x="0" y="0" width="10" height="2.6" fill="#f4c27a"/><rect x="0" y="4" width="10" height="2.6" fill="#f4c27a"/><rect x="0" y="8" width="10" height="2.6" fill="#f4c27a"/></svg>
<div style="position:absolute;left:808.40px;top:637px;font-family:'Liberation Sans', sans-serif;font-size:13.5px;line-height:15.082px;color:#7b1111;white-space:pre;letter-spacing:-0.352px;">this</div>
<div style="position:absolute;left:831.40px;top:637px;font-family:'Liberation Sans', sans-serif;font-size:13.5px;line-height:15.082px;color:#000000;white-space:pre;">=</div>
<div style="position:absolute;left:844.50px;top:637px;font-family:'Liberation Sans', sans-serif;font-size:13.5px;line-height:15.082px;color:#8c8c8c;white-space:pre;letter-spacing:-0.521px;">{Plugin@14107}</div>
<svg style="position:absolute;left:771px;top:658.2px" width="10" height="12"><path d="M3 1.8 L7.5 6 L3 10.2" fill="none" stroke="#6e6e6e" stroke-width="1.3"/></svg>
<svg style="position:absolute;left:789px;top:656.2px" width="16" height="16"><circle cx="8" cy="8" r="7.2" fill="#f6cb8b"/><path d="M6.2 5.5 V13 M6.2 6.5 Q6.5 5.2 8.3 5.2 Q10.5 5.2 10.5 7.6 Q10.5 10 8.3 10 Q6.5 10 6.2 8.8" fill="none" stroke="#4a4a4a" stroke-width="1.1"/></svg>
<div style="position:absolute;left:808.40px;top:657px;font-family:'Liberation Sans', sans-serif;font-size:13.5px;line-height:15.082px;color:#7b1111;white-space:pre;letter-spacing:-0.282px;">proxy</div>
<div style="position:absolute;left:845.40px;top:657px;font-family:'Liberation Sans', sans-serif;font-size:13.5px;line-height:15.082px;color:#000000;white-space:pre;">=</div>
<div style="position:absolute;left:857.60px;top:657px;font-family:'Liberation Sans', sans-serif;font-size:13.5px;line-height:15.082px;color:#8c8c8c;white-space:pre;letter-spacing:-0.512px;">{$Proxy137@14109}</div>
<div style="position:absolute;left:975.00px;top:657px;font-family:'Liberation Sans', sans-serif;font-size:13.5px;line-height:15.082px;color:#000000;white-space:pre;"> &quot;org.apache.ibatis.plugin.Plugin@</div>
<svg style="position:absolute;left:771px;top:678.1px" width="10" height="12"><path d="M3 1.8 L7.5 6 L3 10.2" fill="none" stroke="#6e6e6e" stroke-width="1.3"/></svg>
<svg style="position:absolute;left:789px;top:676.1px" width="16" height="16"><circle cx="8" cy="8" r="7.2" fill="#f6cb8b"/><path d="M6.2 5.5 V13 M6.2 6.5 Q6.5 5.2 8.3 5.2 Q10.5 5.2 10.5 7.6 Q10.5 10 8.3 10 Q6.5 10 6.2 8.8" fill="none" stroke="#4a4a4a" stroke-width="1.1"/></svg>
<div style="position:absolute;left:808.40px;top:677px;font-family:'Liberation Sans', sans-serif;font-size:13.5px;line-height:15.082px;color:#7b1111;white-space:pre;letter-spacing:-0.238px;">method</div>
<div style="position:absolute;left:858.40px;top:677px;font-family:'Liberation Sans', sans-serif;font-size:13.5px;line-height:15.082px;color:#000000;white-space:pre;">=</div>
<div style="position:absolute;left:869.70px;top:677px;font-family:'Liberation Sans', sans-serif;font-size:13.5px;line-height:15.082px;color:#8c8c8c;white-space:pre;letter-spacing:-0.192px;">{Method@14110}</div>
<div style="position:absolute;left:972.00px;top:677px;font-family:'Liberation Sans', sans-serif;font-size:13.5px;line-height:15.082px;color:#000000;white-space:pre;"> &quot;public abstract java.util.List</div>
<svg style="position:absolute;left:771px;top:698.0px" width="10" height="12"><path d="M3 1.8 L7.5 6 L3 10.2" fill="none" stroke="#6e6e6e" stroke-width="1.3"/></svg>
<svg style="position:absolute;left:789px;top:696.0px" width="16" height="16"><circle cx="8" cy="8" r="7.2" fill="#f6cb8b"/><path d="M6.2 5.5 V13 M6.2 6.5 Q6.5 5.2 8.3 5.2 Q10.5 5.2 10.5 7.6 Q10.5 10 8.3 10 Q6.5 10 6.2 8.8" fill="none" stroke="#4a4a4a" stroke-width="1.1"/></svg>
<div style="position:absolute;left:808.40px;top:697px;font-family:'Liberation Sans', sans-serif;font-size:13.5px;line-height:15.082px;color:#7b1111;white-space:pre;letter-spacing:-0.665px;">args</div>
<div style="position:absolute;left:838.90px;top:697px;font-family:'Liberation Sans', sans-serif;font-size:13.5px;line-height:15.082px;color:#000000;white-space:pre;">=</div>
<div style="position:absolute;left:851.50px;top:697px;font-family:'Liberation Sans', sans-serif;font-size:13.5px;line-height:15.082px;color:#8c8c8c;white-space:pre;letter-spacing:-0.270px;">{Object[4]@14111}</div>
<svg style="position:absolute;left:771px;top:717.9px" width="10" height="12"><path d="M3 1.8 L7.5 6 L3 10.2" fill="none" stroke="#6e6e6e" stroke-width="1.3"/></svg>
<svg style="position:absolute;left:787px;top:718.9px" width="19" height="10"><circle cx="4.8" cy="5" r="3.7" fill="none" stroke="#9aabb8" stroke-width="1.6"/><circle cx="13.6" cy="5" r="3.7" fill="none" stroke="#9aabb8" stroke-width="1.6"/><line x1="8.5" y1="5" x2="9.9" y2="5" stroke="#9aabb8" stroke-width="1.4"/></svg>
<div style="position:absolute;left:808.40px;top:717px;font-family:'Liberation Sans', sans-serif;font-size:13.5px;line-height:15.082px;color:#7b1111;white-space:pre;letter-spacing:0.234px;">signatureMap</div>
<div style="position:absolute;left:893.40px;top:717px;font-family:'Liberation Sans', sans-serif;font-size:13.5px;line-height:15.082px;color:#000000;white-space:pre;">=</div>
<div style="position:absolute;left:905.00px;top:717px;font-family:'Liberation Sans', sans-serif;font-size:13.5px;line-height:15.082px;color:#8c8c8c;white-space:pre;letter-spacing:-0.336px;">{HashMap@14108}</div>
<div style="position:absolute;left:1019.00px;top:717px;font-family:'Liberation Sans', sans-serif;font-size:13.5px;line-height:15.082px;color:#000000;white-space:pre;">  size = 1</div>
<svg style="position:absolute;left:771px;top:737.8px" width="10" height="12"><path d="M3 1.8 L7.5 6 L3 10.2" fill="none" stroke="#6e6e6e" stroke-width="1.3"/></svg>
<svg style="position:absolute;left:787px;top:738.8px" width="19" height="10"><circle cx="4.8" cy="5" r="3.7" fill="none" stroke="#9aabb8" stroke-width="1.6"/><circle cx="13.6" cy="5" r="3.7" fill="none" stroke="#9aabb8" stroke-width="1.6"/><line x1="8.5" y1="5" x2="9.9" y2="5" stroke="#9aabb8" stroke-width="1.4"/></svg>
<div style="position:absolute;left:808.40px;top:736px;font-family:'Liberation Sans', sans-serif;font-size:13.5px;line-height:15.082px;color:#7b1111;white-space:pre;letter-spacing:-0.198px;">interceptor</div>
<div style="position:absolute;left:875.30px;top:736px;font-family:'Liberation Sans', sans-serif;font-size:13.5px;line-height:15.082px;color:#000000;white-space:pre;">=</div>
<div style="position:absolute;left:889.00px;top:736px;font-family:'Liberation Sans', sans-serif;font-size:13.5px;line-height:15.082px;color:#8c8c8c;white-space:pre;letter-spacing:-0.462px;">{PageHelper@9598}</div>
<svg style="position:absolute;left:771px;top:757.7px" width="10" height="12"><path d="M3 1.8 L7.5 6 L3 10.2" fill="none" stroke="#6e6e6e" stroke-width="1.3"/></svg>
<svg style="position:absolute;left:787px;top:758.7px" width="19" height="10"><circle cx="4.8" cy="5" r="3.7" fill="none" stroke="#9aabb8" stroke-width="1.6"/><circle cx="13.6" cy="5" r="3.7" fill="none" stroke="#9aabb8" stroke-width="1.6"/><line x1="8.5" y1="5" x2="9.9" y2="5" stroke="#9aabb8" stroke-width="1.4"/></svg>
<div style="position:absolute;left:808.40px;top:756px;font-family:'Liberation Sans', sans-serif;font-size:13.5px;line-height:15.082px;color:#7b1111;white-space:pre;letter-spacing:-0.487px;">target</div>
<div style="position:absolute;left:847.10px;top:756px;font-family:'Liberation Sans', sans-serif;font-size:13.5px;line-height:15.082px;color:#000000;white-space:pre;">=</div>
<div style="position:absolute;left:860.60px;top:756px;font-family:'Liberation Sans', sans-serif;font-size:13.5px;line-height:15.082px;color:#8c8c8c;white-space:pre;letter-spacing:-0.520px;">{CachingExecutor@14112}</div>
<svg style="position:absolute;left:13px;top:554px" width="18" height="17" viewBox="0 0 18 17"><path d="M13 7.5 A5.5 5.5 0 1 0 9 12.8" fill="none" stroke="#59a869" stroke-width="2.2"/><polygon points="9.5,0.5 15.5,5 9.5,9" fill="#59a869"/><rect x="11" y="11" width="5" height="5" fill="#6e6e6e"/></svg>
<svg style="position:absolute;left:13px;top:579px" width="18" height="17" viewBox="0 0 18 17"><ellipse cx="7" cy="8.5" rx="3.3" ry="4.5" fill="#59a869"/><path d="M2 4 L12 4 M1.5 8.5 L12.5 8.5 M2 13 L12 13 M4.5 1 L6 4 M9.5 1 L8 4" stroke="#59a869" stroke-width="1.6"/><rect x="10.5" y="10.5" width="5.5" height="5.5" fill="#6e6e6e"/></svg>
<div style="position:absolute;left:16px;top:609px;width:10px;height:10px;background:#db5860;"></div>
<svg style="position:absolute;left:12px;top:632px" width="20" height="17" viewBox="0 0 20 17"><path d="M1 8.5 H17" stroke="#59a869" stroke-width="2"/><polygon points="13,4.5 18.5,8.5 13,12.5" fill="#59a869"/><path d="M7.5 1 L11.5 4.5 M7.5 16 L11.5 12.5" stroke="#59a869" stroke-width="2"/><polygon points="9,0.5 12.5,0.5 12.5,4.5" fill="#59a869"/></svg>
<svg style="position:absolute;left:14px;top:659px" width="16" height="14" viewBox="0 0 16 14"><polygon points="4,3.5 7.5,7 4,10.5 0.5,7" fill="#40b6e0"/><polygon points="12,3.5 15.5,7 12,10.5 8.5,7" fill="#40b6e0"/><polygon points="8,0 11,3 8,6 5,3" fill="#9aa7b0"/><polygon points="8,8 11,11 8,14 5,11" fill="#9aa7b0"/></svg>
<svg style="position:absolute;left:14px;top:684px" width="15" height="15" viewBox="0 0 15 15"><path d="M2 13 L8 7" stroke="#6e6e6e" stroke-width="2.6"/><path d="M7 8.5 A4 4 0 1 1 12.8 3.5 L10.5 5.5 L9 4 L11.2 1.8" fill="#6e6e6e" stroke="#6e6e6e" stroke-width="1"/></svg>
<div style="position:absolute;left:11px;top:708px;width:20px;height:1px;background:#d0d0d0;"></div>
<svg style="position:absolute;left:14px;top:718px" width="15" height="15" viewBox="0 0 15 15"><path d="M12 8 A5 5 0 1 1 9.8 3.3" fill="none" stroke="#6e6e6e" stroke-width="2"/><polygon points="8,0.5 13.5,3 9,6.5" fill="#6e6e6e"/></svg>
<div style="position:absolute;left:11px;top:741px;width:20px;height:1px;background:#d0d0d0;"></div>
<svg style="position:absolute;left:15px;top:752px" width="14" height="12" viewBox="0 0 14 12"><rect x="0.5" y="0.5" width="3" height="11" fill="#59a869"/><polygon points="5.5,0.5 13,6 5.5,11.5" fill="#59a869"/></svg>
<svg style="position:absolute;left:43px;top:553px" width="13" height="14" viewBox="0 0 13 14"><rect x="0" y="0" width="12" height="1.6" fill="#6e6e6e"/><rect x="0" y="12.2" width="12" height="1.6" fill="#6e6e6e"/><polygon points="3,5.5 6,2.8 9,5.5" fill="#6e6e6e"/><polygon points="3,8.3 6,11 9,8.3" fill="#6e6e6e"/><rect x="2" y="6.2" width="8" height="1.4" fill="#6e6e6e"/></svg>
<svg style="position:absolute;left:69px;top:553px" width="13" height="14" viewBox="0 0 13 14"><rect x="0" y="6.2" width="12" height="1.6" fill="#6e6e6e"/><polygon points="3,1 6,4.2 9,1" fill="#6e6e6e"/><polygon points="3,13 6,9.8 9,13" fill="#6e6e6e"/></svg>
<div style="position:absolute;left:91px;top:550px;width:1px;height:19px;background:#cfcfcf;"></div>
<svg style="position:absolute;left:103px;top:555px" width="14" height="15" viewBox="0 0 14 15"><rect x="0" y="0" width="4.2" height="4.2" fill="#6e6e6e"/><rect x="5.8" y="0" width="4.2" height="4.2" fill="#6e6e6e"/><rect x="0" y="5.8" width="4.2" height="4.2" fill="#6e6e6e"/><rect x="5.8" y="5.8" width="4.2" height="4.2" fill="#6e6e6e"/><polygon points="8,11 13,11 10.5,13.8" fill="#6e6e6e"/></svg>
<svg style="position:absolute;left:127px;top:555px" width="17" height="15" viewBox="0 0 17 15"><polygon points="0.5,0.5 12.5,0.5 8,6 8,11 5,11 5,6" fill="#6e6e6e"/><polygon points="11,11 16,11 13.5,13.8" fill="#6e6e6e"/></svg>
<svg style="position:absolute;left:152px;top:553px" width="17" height="14" viewBox="0 0 17 14"><path d="M1 13 Q2.5 13 2.5 11 V3 Q2.5 1 4.5 1 H12 Q14 1 14 3 V11 Q14 13 15.5 13" fill="none" stroke="#6e6e6e" stroke-width="1.3"/><path d="M8.2 3.5 V10.5 M4.8 7 H11.6" stroke="#6e6e6e" stroke-width="1.5"/></svg>
<svg style="position:absolute;left:177px;top:556px" width="9" height="8" viewBox="0 0 9 8"><path d="M0.5 1 L3.5 4 L0.5 7 M4.5 1 L7.5 4 L4.5 7" fill="none" stroke="#8c8c8c" stroke-width="0.9"/></svg>
<svg style="position:absolute;left:633px;top:557px" width="13" height="12" viewBox="0 0 13 12"><rect x="0" y="0" width="12" height="2" fill="#6e6e6e"/><rect x="0" y="4.5" width="12" height="2" fill="#3592c4"/><rect x="0" y="9" width="12" height="2" fill="#6e6e6e"/></svg>
<div style="position:absolute;left:655px;top:553px;width:1px;height:19px;background:#cfcfcf;"></div>
<svg style="position:absolute;left:665px;top:554px" width="14" height="15" viewBox="0 0 14 15"><path d="M1.2 8.5 Q4.5 2.5 9.5 5.8" fill="none" stroke="#3592c4" stroke-width="1.9"/><polygon points="7.2,3 13,6.5 7.5,9.5" fill="#3592c4"/><rect x="0.5" y="12.5" width="13" height="1.8" fill="#6e6e6e"/></svg>
<svg style="position:absolute;left:692px;top:555px" width="13" height="14" viewBox="0 0 13 14"><rect x="5" y="0.5" width="2" height="5" fill="#3592c4"/><polygon points="1,5 11,5 6,10" fill="#3592c4"/><rect x="0" y="11.5" width="12" height="1.8" fill="#6e6e6e"/></svg>
<svg style="position:absolute;left:718px;top:555px" width="13" height="14" viewBox="0 0 13 14"><rect x="5" y="0.5" width="2" height="5" fill="#db5860"/><polygon points="1,5 11,5 6,10" fill="#db5860"/><rect x="0" y="11.5" width="12" height="1.8" fill="#6e6e6e"/></svg>
<svg style="position:absolute;left:744px;top:555px" width="13" height="14" viewBox="0 0 13 14"><polygon points="6,0.5 11,5.5 1,5.5" fill="#3592c4"/><rect x="5" y="5" width="2" height="5" fill="#3592c4"/><rect x="0" y="11.5" width="12" height="1.8" fill="#6e6e6e"/></svg>
<svg style="position:absolute;left:770px;top:555px" width="14" height="14" viewBox="0 0 14 14"><path d="M0.5 0.5 L5 5 M5 0.5 L0.5 5" stroke="#db5860" stroke-width="1.6"/><path d="M5.5 5.5 H11.8 V12.8 H5 V9" fill="none" stroke="#6e6e6e" stroke-width="1.6"/></svg>
<svg style="position:absolute;left:795px;top:555px" width="15" height="15" viewBox="0 0 15 15"><path d="M1 1 L8 7" stroke="#3592c4" stroke-width="2"/><polygon points="9.5,2.5 9.5,9 3,9" fill="#3592c4"/><path d="M10.5 6.5 H14 M12.2 6.5 V14 M10.5 14 H14" stroke="#555" stroke-width="1"/></svg>
<div style="position:absolute;left:818px;top:553px;width:1px;height:19px;background:#cfcfcf;"></div>
<svg style="position:absolute;left:828px;top:556px" width="13" height="13" viewBox="0 0 13 13"><rect x="0.5" y="0.5" width="12" height="12" fill="#6e6e6e"/><rect x="2.5" y="2.5" width="8" height="2" fill="#f2f2f2"/><g fill="#f2f2f2"><rect x="2.5" y="6" width="2" height="1.8"/><rect x="5.5" y="6" width="2" height="1.8"/><rect x="8.5" y="6" width="2" height="1.8"/><rect x="2.5" y="9" width="2" height="1.8"/><rect x="5.5" y="9" width="2" height="1.8"/><rect x="8.5" y="9" width="2" height="1.8"/></g></svg>
<svg style="position:absolute;left:854px;top:557px" width="14" height="12" viewBox="0 0 14 12"><g stroke="#b8b8b8" stroke-width="1.6" fill="none"><path d="M0 1 H5 M0 5.5 H4 M0 10 H5 M9 1 H14 M10 5.5 H14 M9 10 H14 M5 1 L9 5.5 L5 10"/></g></svg>
<svg style="position:absolute;left:692px;top:613px" width="14" height="13" viewBox="0 0 14 13"><polygon points="0.5,0.5 13,0.5 8.5,6 8.5,12.5 5,12.5 5,6" fill="#6e6e6e"/></svg>
<svg style="position:absolute;left:719px;top:618px" width="10" height="6" viewBox="0 0 10 6"><polygon points="0,0 9,0 4.5,5" fill="#6e6e6e"/></svg>
<svg style="position:absolute;left:746px;top:614px" width="12" height="12" viewBox="0 0 12 12"><path d="M6 1 V11 M1 6 H11" stroke="#6e6e6e" stroke-width="2"/></svg>
<svg style="position:absolute;left:746px;top:644px" width="13" height="3" viewBox="0 0 13 3"><rect x="0.5" y="0" width="12" height="1.6" fill="#b9b9b9"/></svg>
<svg style="position:absolute;left:745px;top:667px" width="14" height="8" viewBox="0 0 14 8"><polygon points="0.5,7 7,0.5 13.5,7" fill="#c5c5c5"/></svg>
<svg style="position:absolute;left:745px;top:694px" width="14" height="8" viewBox="0 0 14 8"><polygon points="0.5,0.5 7,7 13.5,0.5" fill="#c5c5c5"/></svg>
<svg style="position:absolute;left:745px;top:715px" width="14" height="14" viewBox="0 0 14 14"><rect x="0.5" y="0.5" width="8" height="10" fill="none" stroke="#b0b0b0" stroke-width="1.3"/><rect x="4" y="3.5" width="8.5" height="10" fill="#f2f2f2" stroke="#b0b0b0" stroke-width="1.3"/></svg>
<svg style="position:absolute;left:744px;top:743px" width="16" height="14" viewBox="0 0 16 14"><path d="M0.8 5.5 Q7 -1.5 13.2 5.5 Q7 12.5 0.8 5.5 Z" fill="none" stroke="#6e6e6e" stroke-width="1.5"/><circle cx="7" cy="5.5" r="2.2" fill="#6e6e6e"/><polygon points="10.5,10 15,10 12.75,13" fill="#333"/></svg>
<svg style="position:absolute;left:41px;top:620px" width="11" height="7" viewBox="0 0 11 7"><path d="M0.8 0.8 L5 5 L9.2 0.8" fill="none" stroke="#7a7a7a" stroke-width="1.2"/></svg>
<svg style="position:absolute;left:58px;top:618px" width="14" height="14" viewBox="0 0 14 14"><path d="M1 12 Q3 6 7 5 L9 2 L10 5 L12.5 3 L12 8 Q11 12 7 12 Z" fill="#e8b43a"/><path d="M2 11 Q5 8 9 9 M8 5 L9.5 7" stroke="#333" stroke-width="1.2" fill="none"/></svg>
<svg style="position:absolute;left:71px;top:613px;filter:blur(0.6px)" width="80" height="24"><defs><clipPath id="m1"><rect x="0" y="0" width="80" height="24" rx="9"/></clipPath></defs><g clip-path="url(#m1)"><rect x="0" y="0" width="12.5" height="12.5" fill="#c9c9c1"/><rect x="12" y="0" width="12.5" height="12.5" fill="#c3c3c3"/><rect x="24" y="0" width="12.5" height="12.5" fill="#c6c6c6"/><rect x="36" y="0" width="12.5" height="12.5" fill="#c0c0c1"/><rect x="48" y="0" width="12.5" height="12.5" fill="#c7c7c7"/><rect x="60" y="0" width="12.5" height="12.5" fill="#cacaca"/><rect x="72" y="0" width="12.5" height="12.5" fill="#d0d0d0"/><rect x="0" y="12" width="12.5" height="12.5" fill="#b5b8ae"/><rect x="12" y="12" width="12.5" height="12.5" fill="#9f9f9f"/><rect x="24" y="12" width="12.5" height="12.5" fill="#a9a9a9"/><rect x="36" y="12" width="12.5" height="12.5" fill="#9c9c9c"/><rect x="48" y="12" width="12.5" height="12.5" fill="#a3a3a3"/><rect x="60" y="12" width="12.5" height="12.5" fill="#909092"/><rect x="72" y="12" width="12.5" height="12.5" fill="#aaaaaa"/></g></svg>
<svg style="position:absolute;left:106px;top:634px;filter:blur(0.6px)" width="73" height="24"><defs><clipPath id="m2"><rect x="0" y="0" width="73" height="24" rx="10"/></clipPath></defs><g clip-path="url(#m2)"><rect x="0" y="0" width="12.5" height="12.5" fill="#f0f0f0"/><rect x="12" y="0" width="12.5" height="12.5" fill="#e8e8e8"/><rect x="24" y="0" width="12.5" height="12.5" fill="#dcd9d9"/><rect x="36" y="0" width="12.5" height="12.5" fill="#ededed"/><rect x="48" y="0" width="12.5" height="12.5" fill="#dedede"/><rect x="60" y="0" width="12.5" height="12.5" fill="#e3e3e3"/><rect x="72" y="0" width="12.5" height="12.5" fill="#ececec"/><rect x="0" y="12" width="12.5" height="12.5" fill="#f3f3f3"/><rect x="12" y="12" width="12.5" height="12.5" fill="#eeeeee"/><rect x="24" y="12" width="12.5" height="12.5" fill="#e9e9e9"/><rect x="36" y="12" width="12.5" height="12.5" fill="#f1f1f1"/><rect x="48" y="12" width="12.5" height="12.5" fill="#e5e5e5"/><rect x="60" y="12" width="12.5" height="12.5" fill="#e9e9e9"/><rect x="72" y="12" width="12.5" height="12.5" fill="#f0f0f0"/></g></svg>
<svg style="position:absolute;left:77px;top:638px" width="16" height="16" viewBox="0 0 16 16"><polygon points="4,4 7.5,7.5 4,11 0.5,7.5" fill="#40b6e0"/><polygon points="8,0.5 11,3.5 8,6.5 5,3.5" fill="#9aa7b0"/><circle cx="10.5" cy="11" r="4" fill="#fff" stroke="#9aa7b0" stroke-width="1.1"/><path d="M8 10 Q10 9 11 11 Q12 13 13.5 12" stroke="#9aa7b0" fill="none" stroke-width="0.9"/></svg>
<svg style="position:absolute;left:94px;top:640px" width="13" height="11" viewBox="0 0 13 11"><polyline points="1.5,5.5 5,9 11.5,1.5" fill="none" stroke="#62b543" stroke-width="2.2"/></svg>
<div style="position:absolute;left:218px;top:129.5px;width:81px;height:38px;border:3px solid #ff1a1a;border-radius:4px;"></div>
<div style="position:absolute;left:196.5px;top:677.5px;width:433px;height:22.5px;border:3px solid #ff1a1a;border-radius:3px;"></div>
<svg style="position:absolute;left:0;top:0" width="1062" height="776"><polygon points="673.1,347.6 641.1,400.0 597.7,470.0 555.0,540.0 494.8,640.0 478.7,665.3 475.3,660.6 476.3,679.5 491.3,669.4 485.9,669.6 503.0,640.0 562.8,540.0 604.1,470.0 644.7,400.0 675.5,347.6" fill="#ff1a1a"/></svg>
<svg style="position:absolute;left:740px;top:700px" width="70" height="52" viewBox="740 700 70 52">
<g fill="rgba(255,255,255,0.9)" stroke="rgba(90,90,90,0.55)" stroke-width="1">
<path d="M767.5 708.3 C758 708.3 751.3 714.5 751.3 722 C751.3 726.5 753.5 730 757 732.5 L755.5 739.5 L762 735.3 C763.8 735.8 765.6 736 767.5 736 C777 736 783.7 729.7 783.7 722 C783.7 714.5 777 708.3 767.5 708.3 Z"/>
<path d="M780.3 719.6 C772.5 719.6 766.4 725 766.4 731.6 C766.4 738.2 772.5 743.6 780.3 743.6 C782 743.6 783.5 743.4 785 743 L791.5 746.5 L790 740 C792.7 737.8 794.2 734.8 794.2 731.6 C794.2 725 788 719.6 780.3 719.6 Z"/>
</g>
<g fill="#8a8a8a"><circle cx="761" cy="717.3" r="1.5"/><circle cx="772.4" cy="717.3" r="1.5"/><circle cx="776" cy="727.5" r="1.3"/><circle cx="785" cy="727.5" r="1.3"/></g>
</svg>
<div style="position:absolute;left:885.00px;top:714px;font-family:'Liberation Sans', sans-serif;font-size:26px;line-height:29.047px;color:rgba(255,255,255,0.9);white-space:pre;letter-spacing:1.484px;text-shadow:1px 1px 0.6px rgba(40,40,40,0.85);">team_code</div>
<svg style="position:absolute;left:803px;top:713px" width="72" height="26" viewBox="0 0 100 44" preserveAspectRatio="none">
<g fill="none" stroke-linecap="square">
<g stroke="rgba(40,40,40,0.75)" stroke-width="1.7" vector-effect="non-scaling-stroke" transform="translate(1.6,1.8)">
<path vector-effect="non-scaling-stroke" d="M8 6 L3 17 M9 13 L3 28 M6 20 V40 M13 8 V16 H25 V8 M19 4 V17 M12 20 H26 M14 24 V31 H24 V24 M27 6 L24 14 M26 12 H34 M31 12 Q30 30 22 40 M26 20 Q30 32 35 40"/>
<path vector-effect="non-scaling-stroke" d="M44 5 L38 18 M41 14 V40 M49 7 H64 M48 13 H66 M49 19 H64 M49 25 H64 M49 31 V40 H64 V31 H49"/>
<path vector-effect="non-scaling-stroke" d="M72 6 H90 V15 H72 Z M69 20 H94 M76 25 H92 Q92 36 86 40 Q83 41 80 39 M76 25 L74 31"/>
</g>
<g stroke="rgba(255,255,255,0.95)" stroke-width="1.7">
<path vector-effect="non-scaling-stroke" d="M8 6 L3 17 M9 13 L3 28 M6 20 V40 M13 8 V16 H25 V8 M19 4 V17 M12 20 H26 M14 24 V31 H24 V24 M27 6 L24 14 M26 12 H34 M31 12 Q30 30 22 40 M26 20 Q30 32 35 40"/>
<path vector-effect="non-scaling-stroke" d="M44 5 L38 18 M41 14 V40 M49 7 H64 M48 13 H66 M49 19 H64 M49 25 H64 M49 31 V40 H64 V31 H49"/>
<path vector-effect="non-scaling-stroke" d="M72 6 H90 V15 H72 Z M69 20 H94 M76 25 H92 Q92 36 86 40 Q83 41 80 39 M76 25 L74 31"/>
</g></g></svg>
<div style="position:absolute;left:876px;top:723px;width:2.5px;height:2.5px;background:#fff;box-shadow:1px 1px 1px rgba(30,30,30,0.8)"></div><div style="position:absolute;left:876px;top:733px;width:2.5px;height:2.5px;background:#fff;box-shadow:1px 1px 1px rgba(30,30,30,0.8)"></div>
</body></html>
